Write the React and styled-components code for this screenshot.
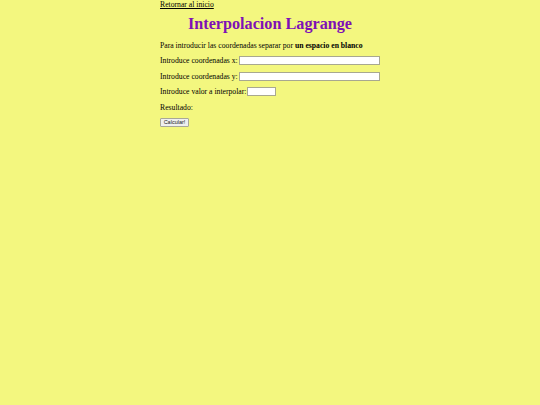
import styled, { createGlobalStyle } from "styled-components";

const GlobalStyle = createGlobalStyle`
  html, body {
    margin: 0;
    padding: 0;
    background: #f3f77f;
  }
  body {
    font-family: "Liberation Serif", "Times New Roman", serif;
    font-size: 7.7px;
    color: #000;
  }
`;

const Page = styled.div`
  width: 220px;
  margin: 0 auto;
`;

const BackLink = styled.a`
  display: inline-block;
  color: #000;
  text-decoration: underline;
  line-height: 9px;
`;

const Title = styled.h1`
  margin: 6px 0 8px;
  text-align: center;
  font-size: 16.2px;
  line-height: 18px;
  font-weight: bold;
  color: #7e10b6;
`;

const Note = styled.p`
  margin: 0 0 6px;
  line-height: 9px;
  white-space: nowrap;
`;

const Row = styled.div`
  display: flex;
  align-items: center;
  gap: 1px;
  margin-bottom: 6.5px;
  line-height: 9px;
  white-space: nowrap;
`;

const Field = styled.input`
  box-sizing: border-box;
  height: 9px;
  width: ${(p) => p.$w}px;
  border: 1px solid #a8a890;
  background: #fff;
  padding: 0;
  font-size: 6px;
`;

const Button = styled.button`
  box-sizing: border-box;
  height: 9px;
  width: 29px;
  padding: 0;
  font-family: "Liberation Sans", Arial, sans-serif;
  font-size: 5.5px;
  line-height: 7px;
  border: 1px solid #a8a898;
  border-radius: 1px;
  background: #efefef;
  color: #222;
`;

export default function App() {
  return (
    <>
      <GlobalStyle />
      <Page>
        <BackLink href="#">Retornar al inicio</BackLink>
        <Title>Interpolacion Lagrange</Title>
        <Note>
          Para introducir las coordenadas separar por <b>un espacio en blanco</b>
        </Note>
        <Row>
          Introduce coordenadas x: <Field $w={143} />
        </Row>
        <Row>
          Introduce coordenadas y: <Field $w={143} />
        </Row>
        <Row>
          Introduce valor a interpolar: <Field $w={29} />
        </Row>
        <Row>Resultado:</Row>
        <Row>
          <Button>Calcular!</Button>
        </Row>
      </Page>
    </>
  );
}
